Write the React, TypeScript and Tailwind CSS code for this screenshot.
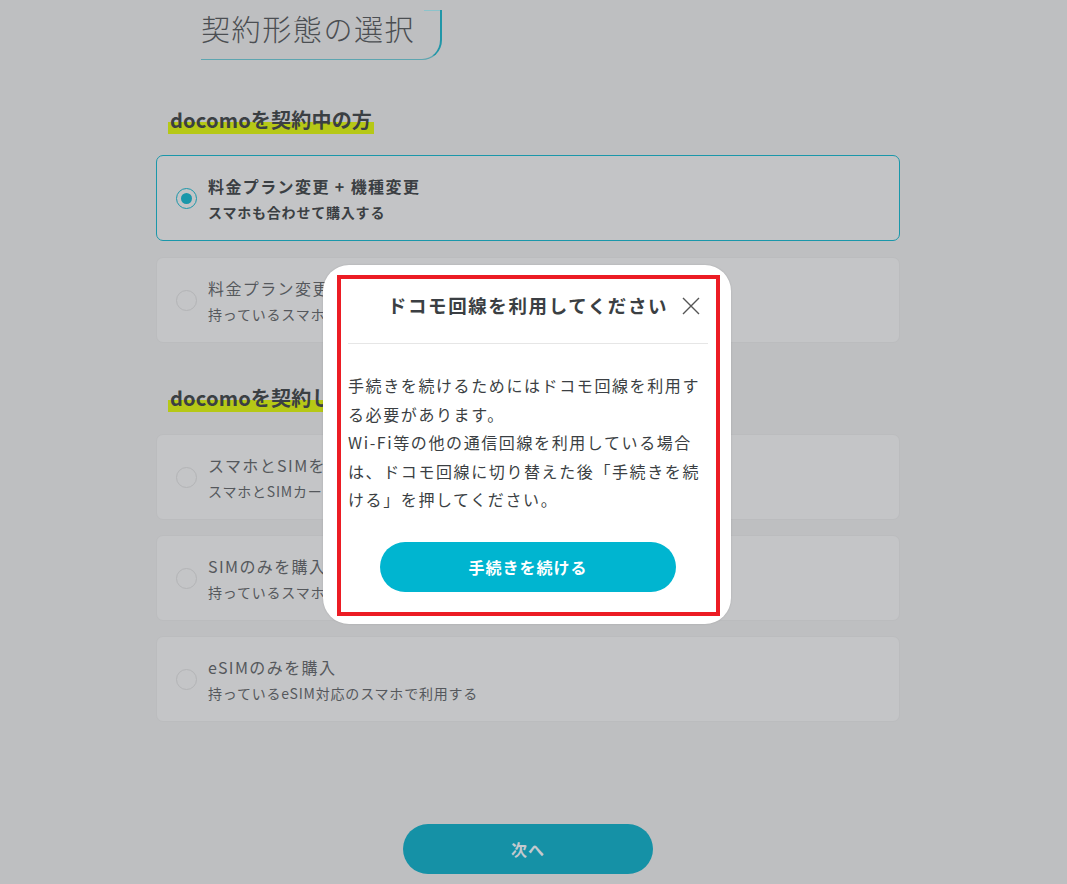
const font = "font-['Noto_Sans_CJK_JP','Noto_Sans',sans-serif]";

interface PlanOption {
  title: string;
  note: string;
  selected?: boolean;
}

const currentOptions: PlanOption[] = [
  { title: "料金プラン変更 + 機種変更", note: "スマホも合わせて購入する", selected: true },
  { title: "料金プラン変更のみ", note: "持っているスマホで利用する" },
];

const newOptions: PlanOption[] = [
  { title: "スマホとSIMを購入", note: "スマホとSIMカードを合わせて購入する" },
  { title: "SIMのみを購入", note: "持っているスマホで利用する" },
  { title: "eSIMのみを購入", note: "持っているeSIM対応のスマホで利用する" },
];

function SectionHeading({ children }: { children: string }) {
  return (
    <h2 className="pl-[12px] text-[20px] font-bold leading-[26px] tracking-[0.2px] text-[#3b3f43]">
      <span className="bg-[linear-gradient(transparent_58%,#b6c816_58%)] px-[2px]">{children}</span>
    </h2>
  );
}

function OptionCard({ option }: { option: PlanOption }) {
  return (
    <div
      className={`flex h-[86px] items-center rounded-[7px] border pl-[19px] ${
        option.selected ? "border-[#1a97aa] bg-[#c3c4c6]" : "border-[#bbbcbe] bg-[#c4c5c7]"
      }`}
    >
      <span
        className={`flex h-[21px] w-[21px] shrink-0 items-center justify-center rounded-full border-[1.5px] ${
          option.selected ? "border-[#1a97aa]" : "border-[#b3b4b6]"
        }`}
      >
        {option.selected && <span className="h-[11px] w-[11px] rounded-full bg-[#1a97aa]" />}
      </span>
      <div className="ml-[11px] flex flex-col">
        <p
          className={`text-[16px] leading-[22px] tracking-[1.4px] ${
            option.selected ? "font-bold text-[#3b3f43]" : "text-[#55585c]"
          }`}
        >
          {option.title}
        </p>
        <p
          className={`mt-[5px] text-[14px] leading-[20px] tracking-[0.8px] ${
            option.selected ? "font-bold text-[#3b3f43]" : "text-[#55585c]"
          }`}
        >
          {option.note}
        </p>
      </div>
    </div>
  );
}

export default function App() {
  return (
    <div className={`relative h-[884px] w-full overflow-hidden bg-[#bebfc1] ${font}`}>
      <div className="ml-[156px] w-[744px]">
        {/* page title */}
        <div className="relative ml-[45px] mt-[12px] h-[50px] w-[241px] rounded-br-[20px] border-b border-r-2 border-b-[#5ea5b0] border-r-[#2096a8]">
          <span className="absolute right-0 top-0 h-px w-[16px] bg-[#8cc3cb]" />
          <h1 className="-mt-[2px] text-[29px] font-light leading-[36px] tracking-[1.6px] text-[#4b4e52]">
            契約形態の選択
          </h1>
        </div>

        <div className="mt-[47px]">
          <SectionHeading>docomoを契約中の方</SectionHeading>
        </div>
        <div className="mt-[22px] flex flex-col gap-[16px]">
          {currentOptions.map((o) => (
            <OptionCard key={o.title} option={o} />
          ))}
        </div>

        <div className="mt-[42px]">
          <SectionHeading>docomoを契約していない方</SectionHeading>
        </div>
        <div className="mt-[23px] flex flex-col gap-[15px]">
          {newOptions.map((o) => (
            <OptionCard key={o.title} option={o} />
          ))}
        </div>

        <div className="mt-[102px] flex justify-center">
          <button className="h-[50px] w-[250px] rounded-full bg-[#1591a6] text-[16px] font-bold tracking-[1px] text-[#c3c9ce]">
            次へ
          </button>
        </div>
      </div>

      {/* modal */}
      <div className="absolute left-[323px] top-[265px] h-[359px] w-[408px] rounded-[26px] bg-white pl-[25px] pr-[23px] shadow-[0_0_2px_rgba(0,0,0,0.15)]">
        <div className="relative flex h-[79px] items-center justify-center border-b border-[#e6e6e6]">
          <h3 className="mt-[3px] text-[18.5px] font-bold tracking-[1.6px] text-[#3b3f43]">
            ドコモ回線を利用してください
          </h3>
          <svg
            className="absolute right-[8px] top-[32px] h-[18px] w-[18px]"
            viewBox="0 0 18 18"
            fill="none"
            stroke="#555"
            strokeWidth={1.4}
          >
            <path d="M1 1 L17 17 M17 1 L1 17" />
          </svg>
        </div>
        <p className="mt-[27px] text-[16px] leading-[28.5px] tracking-[1.6px] text-[#3b3f43]">
          手続きを続けるためにはドコモ回線を利用する必要があります。
          <br />
          Wi-Fi等の他の通信回線を利用している場合は、ドコモ回線に切り替えた後「手続きを続ける」を押してください。
        </p>
        <div className="mt-[28px] flex justify-center">
          <button className="h-[50px] w-[296px] rounded-full bg-[#00b5d0] text-[16px] font-bold tracking-[1px] text-white">
            手続きを続ける
          </button>
        </div>
        <div className="pointer-events-none absolute left-[14px] top-[10px] h-[341px] w-[383px] border-4 border-[#ec1c24]" />
      </div>
    </div>
  );
}
